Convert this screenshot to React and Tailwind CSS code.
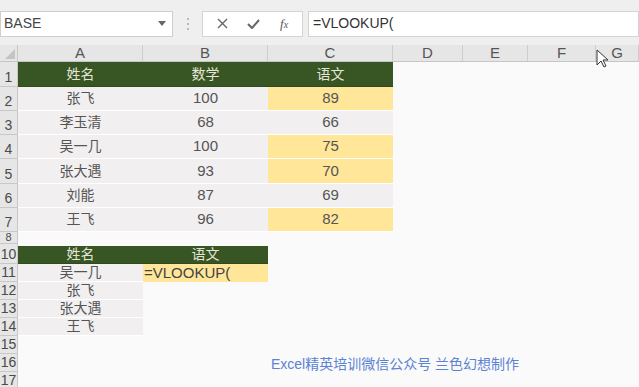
import React from 'react';

const CJK = { fontFamily: '"Liberation Sans", "Noto Sans CJK SC", sans-serif' };

const COLS = ['A', 'B', 'C', 'D', 'E', 'F', 'G'];
const COL_W = ['w-[125px]', 'w-[125px]', 'w-[125px]', 'w-[70px]', 'w-[65px]', 'w-[68px]', 'flex-1'];

const scores = [
    ['张飞', '100', '89', true],
    ['李玉清', '68', '66', false],
    ['吴一几', '100', '75', true],
    ['张大遇', '93', '70', true],
    ['刘能', '87', '69', false],
    ['王飞', '96', '82', true],
];

const lookups = ['吴一几', '张飞', '张大遇', '王飞'];

const Cell = ({ className = '', children, width }) => (
    <div className={`${width} h-full flex items-center shrink-0 ${className}`}>{children}</div>
);

const RowHead = ({ n, small }) => (
    <div
        className={`w-[18px] shrink-0 h-full bg-[#e6e6e6] border-r border-b border-[#c8c8c8] flex items-end justify-center text-[#4a4a4a] ${
            small ? 'text-[11px] leading-[11px]' : 'text-[14px] leading-[16px] pb-[1px]'
        }`}
    >
        {n}
    </div>
);

const Row = ({ n, h, small, children }) => (
    <div className={`flex ${h}`}>
        <RowHead n={n} small={small} />
        {children}
        <div className="flex-1" />
    </div>
);

const green = 'bg-[#375623] text-[#e4e4d8] justify-center border-b border-[#2f4a1e]';
const grey = 'bg-[#f1eff0] text-[#555] justify-center border-b border-white';
const yellow = 'bg-[#ffe699] text-[#555] justify-center border-b border-white';

export default function App() {
    return (
        <div className="w-[639px] h-[387px] overflow-hidden bg-[#fafafa] relative" style={CJK}>
            {/* formula bar */}
            <div className="h-[45px] bg-[#efefef] flex items-center pt-[2px]">
                <div className="w-[173px] h-[26px] bg-white border border-[#cfcfcf] flex items-center pl-[3px] pr-[6px] text-[14px] text-[#444]">
                    <span className="flex-1">BASE</span>
                    <svg width="8" height="5" viewBox="0 0 8 5"><path d="M0 0h8L4 5z" fill="#666" /></svg>
                </div>
                <div className="w-[29px] flex flex-col items-center gap-[3px]">
                    <span className="w-[2px] h-[2px] bg-[#bbb]" />
                    <span className="w-[2px] h-[2px] bg-[#bbb]" />
                    <span className="w-[2px] h-[2px] bg-[#bbb]" />
                </div>
                <div className="w-[101px] h-[26px] bg-white border border-[#d4d4d4] flex items-center justify-around px-[4px]">
                    <svg width="11" height="11" viewBox="0 0 11 11"><path d="M1 1l9 9M10 1l-9 9" stroke="#666" strokeWidth="1.4" /></svg>
                    <svg width="13" height="10" viewBox="0 0 13 10"><path d="M1 5l4 4 7-8" stroke="#666" strokeWidth="2" fill="none" /></svg>
                    <span className="italic text-[#555] text-[13px]" style={{ fontFamily: '"Liberation Serif", serif' }}>
                        f<span className="text-[10px]">x</span>
                    </span>
                </div>
                <div className="flex-1 ml-[5px] h-[26px] bg-white border border-[#d4d4d4] flex items-center pl-[4px] text-[14px] text-[#333]">
                    =VLOOKUP(
                </div>
            </div>

            {/* column headers */}
            <div className="flex h-[17px] bg-[#e6e6e6] border-b border-[#c6c6c6]">
                <div className="w-[18px] shrink-0 border-r border-[#c8c8c8] relative">
                    <svg className="absolute right-[2px] bottom-[2px]" width="10" height="10" viewBox="0 0 10 10"><path d="M10 0v10H0z" fill="#c4c4c4" /></svg>
                </div>
                {COLS.map((c, i) => (
                    <div key={c} className={`${COL_W[i]} shrink-0 border-r border-[#cdcdcd] flex items-end justify-center text-[15px] leading-[16px] text-[#555]`}>
                        {c}
                    </div>
                ))}
            </div>

            {/* table 1 */}
            <Row n="1" h="h-[25px]">
                <Cell width="w-[125px]" className={green + ' text-[14px]'}>姓名</Cell>
                <Cell width="w-[125px]" className={green + ' text-[14px]'}>数学</Cell>
                <Cell width="w-[125px]" className={green + ' text-[14px]'}>语文</Cell>
            </Row>
            {scores.map(([name, math, chn, hi], i) => (
                <Row key={name} n={String(i + 2)} h={i === 3 ? 'h-[25px]' : 'h-[24px]'}>
                    <Cell width="w-[125px]" className={grey + ' text-[14px]'}>{name}</Cell>
                    <Cell width="w-[125px]" className={grey + ' text-[15px]'}>{math}</Cell>
                    <Cell width="w-[125px]" className={(hi ? yellow : grey) + ' text-[15px]'}>{chn}</Cell>
                </Row>
            ))}
            <Row n="8" h="h-[12px]" small />
            <div className="flex h-[2px]"><div className="w-[18px] bg-[#e6e6e6] border-r border-[#c8c8c8]" /></div>

            {/* table 2 */}
            <Row n="10" h="h-[18px]">
                <Cell width="w-[125px]" className={green + ' text-[14px]'}>姓名</Cell>
                <Cell width="w-[125px]" className={green + ' text-[14px]'}>语文</Cell>
            </Row>
            {lookups.map((name, i) => (
                <Row key={name + i} n={String(i + 11)} h="h-[18px]">
                    <Cell width="w-[125px]" className={grey + ' text-[14px]'}>{name}</Cell>
                    {i === 0 ? (
                        <Cell width="w-[125px]" className="bg-[#ffe699] text-[#444] text-[15px] pl-[1px]">=VLOOKUP(</Cell>
                    ) : (
                        <Cell width="w-[125px]" />
                    )}
                </Row>
            ))}
            {['15', '16', '17'].map((n) => (
                <Row key={n} n={n} h="h-[18px]" />
            ))}

            {/* watermark */}
            <div className="absolute left-[271px] top-[354px] text-[14px] text-[#5b82d4] whitespace-nowrap">
                Excel精英培训微信公众号 兰色幻想制作
            </div>

            {/* mouse cursor */}
            <svg className="absolute left-[596px] top-[49px]" width="13" height="19" viewBox="0 0 13 19">
                <path d="M1 1v15l4-4 3 6 2-1-3-6h5z" fill="#fff" stroke="#333" strokeWidth="1" strokeLinejoin="round" />
            </svg>
        </div>
    );
}
